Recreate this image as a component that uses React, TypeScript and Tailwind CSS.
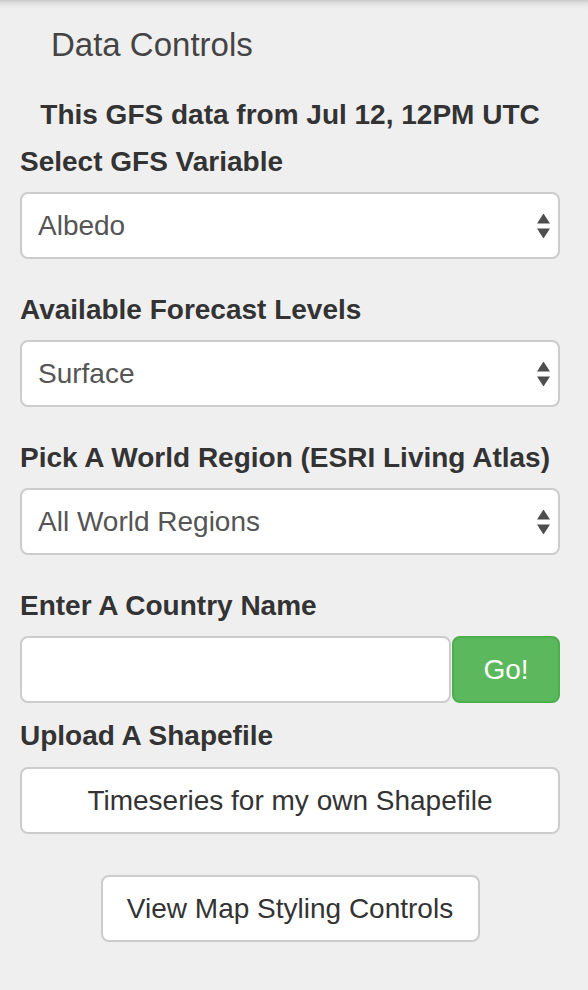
import React from 'react';

function Arrows() {
  return (
    <svg width="13" height="25" viewBox="0 0 13 25" className="absolute right-[8px] top-1/2 -translate-y-1/2">
      <polygon points="6.5,0 13,10 0,10" fill="#4d4d4d" />
      <polygon points="0,15 13,15 6.5,25" fill="#4d4d4d" />
    </svg>
  );
}

function FakeSelect({ value }: { value: string }) {
  return (
    <div className="relative h-[67px] w-full rounded-[8px] border-2 border-[#cccccc] bg-white flex items-center pl-[16px] text-[28px] text-[#555555]">
      {value}
      <Arrows />
    </div>
  );
}

function Label({ children, className = '' }: { children: React.ReactNode; className?: string }) {
  return (
    <div className={`h-[40px] pt-[2px] flex items-center text-[28px] font-bold text-[#333333] ${className}`}>
      {children}
    </div>
  );
}

export default function App() {
  return (
    <div
      className="w-[588px] h-[990px] bg-[#efefef] shadow-[inset_0_9px_9px_-9px_rgba(0,0,0,0.3)] pl-[20px] pr-[28px]"
      style={{ fontFamily: '"Liberation Sans", Arial, sans-serif' }}
    >
      <div className="pt-[25px] pl-[31px] h-[65px] text-[33px] leading-[40px] text-[#444444]">Data Controls</div>

      <div className="mt-[29px] h-[40px] pt-[2px] flex items-center justify-center text-[28px] font-bold text-[#333333]">
        This GFS data from Jul 12, 12PM UTC
      </div>

      <Label className="mt-[7px]">Select GFS Variable</Label>
      <div className="mt-[11px]">
        <FakeSelect value="Albedo" />
      </div>

      <Label className="mt-[30px]">Available Forecast Levels</Label>
      <div className="mt-[11px]">
        <FakeSelect value="Surface" />
      </div>

      <Label className="mt-[30px]">Pick A World Region (ESRI Living Atlas)</Label>
      <div className="mt-[11px]">
        <FakeSelect value="All World Regions" />
      </div>

      <Label className="mt-[30px]">Enter A Country Name</Label>
      <div className="mt-[11px] flex h-[67px]">
        <input
          type="text"
          className="flex-1 min-w-0 h-full rounded-[8px] border-2 border-[#cccccc] bg-white px-[16px] text-[28px] text-[#555555] outline-none"
        />
        <button className="ml-[1px] w-[108px] h-full rounded-[8px] border-2 border-[#4cae4c] bg-[#5cb85c] text-white text-[28px]">
          Go!
        </button>
      </div>

      <Label className="mt-[12px]">Upload A Shapefile</Label>
      <button className="mt-[12px] w-full h-[67px] rounded-[8px] border-2 border-[#cccccc] bg-white text-[28px] text-[#333333]">
        Timeseries for my own Shapefile
      </button>

      <div className="mt-[41px] flex justify-center">
        <button className="w-[379px] h-[67px] rounded-[8px] border-2 border-[#cccccc] bg-white text-[28px] text-[#333333]">
          View Map Styling Controls
        </button>
      </div>
    </div>
  );
}
